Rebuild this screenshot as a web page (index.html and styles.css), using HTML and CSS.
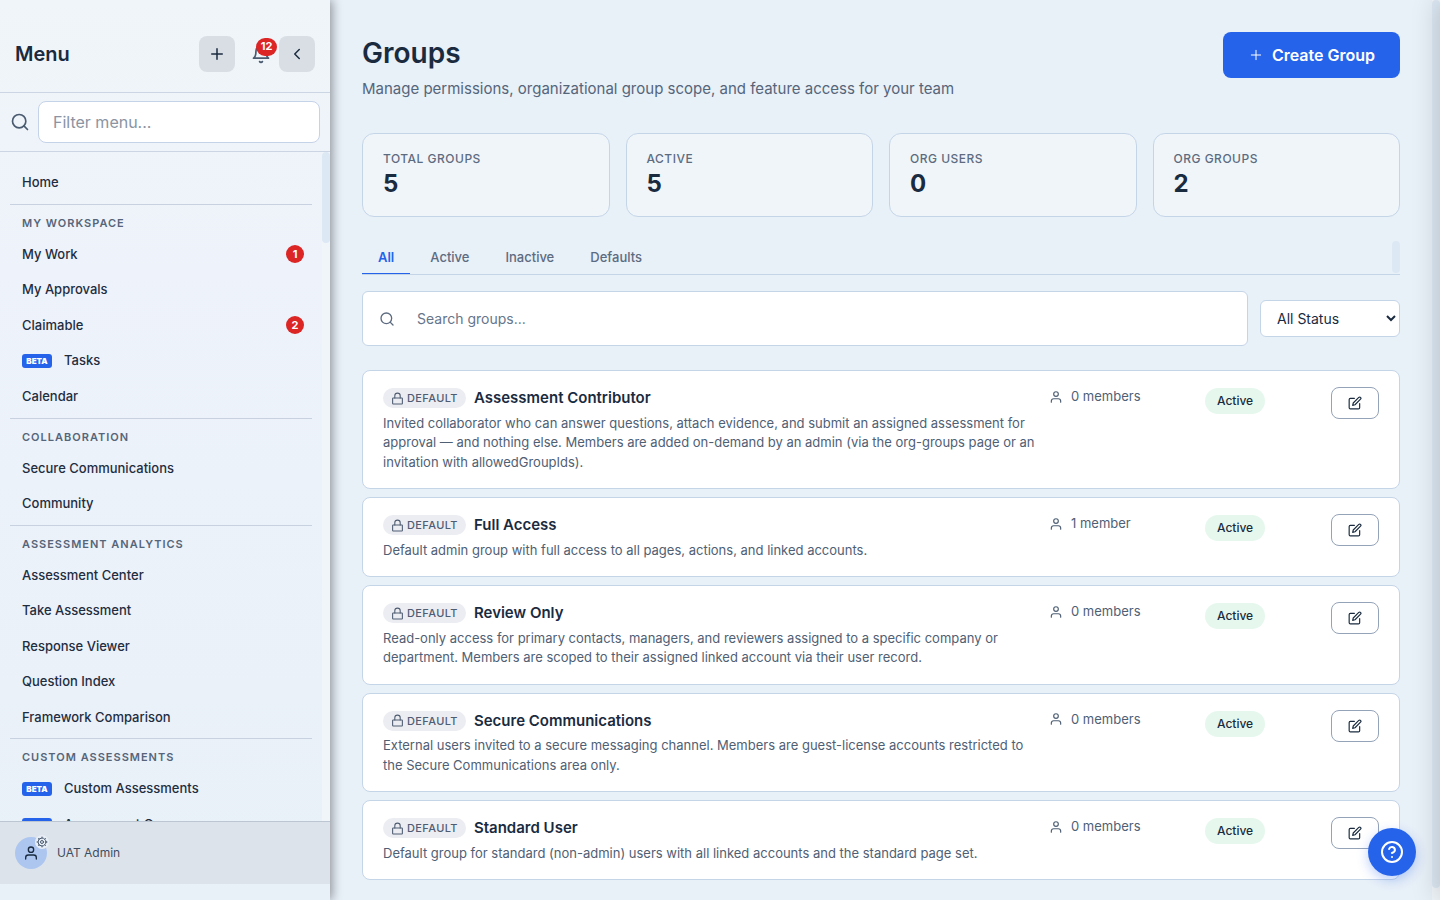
FILE: index.html
```html
<!DOCTYPE html>
<html lang="en">
<head>
    <meta charset="UTF-8">
    <meta name="viewport" content="width=device-width, initial-scale=1.0">
    <title>Groups</title>
    <link rel="stylesheet" href="styles.css">
</head>
<body>
    <!-- Shared icons -->
    <svg class="icon-defs" aria-hidden="true">
        <symbol id="icon-search" viewBox="0 0 24 24"><circle cx="11" cy="11" r="8"/><path d="m21 21-4.3-4.3"/></symbol>
        <symbol id="icon-plus" viewBox="0 0 24 24"><path d="M5 12h14M12 5v14"/></symbol>
        <symbol id="icon-bell" viewBox="0 0 24 24"><path d="M6 8a6 6 0 0 1 12 0c0 7 3 9 3 9H3s3-2 3-9"/><path d="M10.3 21a1.94 1.94 0 0 0 3.4 0"/></symbol>
        <symbol id="icon-left" viewBox="0 0 24 24"><path d="m15 18-6-6 6-6"/></symbol>
        <symbol id="icon-user" viewBox="0 0 24 24"><path d="M20 21v-2a4 4 0 0 0-4-4H8a4 4 0 0 0-4 4v2"/><circle cx="12" cy="7" r="4"/></symbol>
        <symbol id="icon-lock" viewBox="0 0 24 24"><rect x="3" y="11" width="18" height="11" rx="1"/><path d="M7 11V7a5 5 0 0 1 10 0v4"/></symbol>
        <symbol id="icon-edit" viewBox="0 0 24 24"><path d="M11 4H4a2 2 0 0 0-2 2v14a2 2 0 0 0 2 2h14a2 2 0 0 0 2-2v-7"/><path d="M18.5 2.5a2.12 2.12 0 0 1 3 3L12 15l-4 1 1-4z"/></symbol>
        <symbol id="icon-gear" viewBox="0 0 24 24"><circle cx="12" cy="12" r="3"/><circle cx="12" cy="12" r="8"/><path d="M12 4V2M12 22v-2M4 12H2M22 12h-2M6.300 6.300 5 5M19 19l-1.300-1.300M6.300 17.700 5 19M19 5l-1.300 1.300"/></symbol>
        <symbol id="icon-help" viewBox="0 0 24 24"><circle cx="12" cy="12" r="10"/><path d="M9.090 9a3 3 0 0 1 5.830 1c0 2-3 3-3 3M12 17h.01"/></symbol>
    </svg>

    <div class="app">
        <!-- Sidebar -->
        <aside class="sidebar">
            <div class="sidebar-header">
                <h2>Menu</h2>
                <button class="icon-btn" type="button" aria-label="Add"><svg class="icon"><use href="#icon-plus"/></svg></button>
                <button class="icon-btn bell-btn" type="button" aria-label="Notifications">
                    <svg class="icon"><use href="#icon-bell"/></svg>
                    <span class="bell-count">12</span>
                </button>
                <button class="icon-btn" type="button" aria-label="Collapse menu"><svg class="icon"><use href="#icon-left"/></svg></button>
            </div>
            <div class="sidebar-filter">
                <label for="menuFilter" aria-label="Filter menu"><svg class="icon"><use href="#icon-search"/></svg></label>
                <input type="text" id="menuFilter" placeholder="Filter menu...">
            </div>
            <div class="nav-wrap">
                <nav class="nav">
                    <ul>
                        <li><a href="#">Home</a></li>
                    </ul>
                    <h3>My Workspace</h3>
                    <ul>
                        <li><a href="#">My Work <span class="count">1</span></a></li>
                        <li><a href="#">My Approvals</a></li>
                        <li><a href="#">Claimable <span class="count">2</span></a></li>
                        <li><a href="#"><span class="beta">BETA</span>Tasks</a></li>
                        <li><a href="#">Calendar</a></li>
                    </ul>
                    <h3>Collaboration</h3>
                    <ul>
                        <li><a href="#">Secure Communications</a></li>
                        <li><a href="#">Community</a></li>
                    </ul>
                    <h3>Assessment Analytics</h3>
                    <ul>
                        <li><a href="#">Assessment Center</a></li>
                        <li><a href="#">Take Assessment</a></li>
                        <li><a href="#">Response Viewer</a></li>
                        <li><a href="#">Question Index</a></li>
                        <li><a href="#">Framework Comparison</a></li>
                    </ul>
                    <h3>Custom Assessments</h3>
                    <ul>
                        <li><a href="#"><span class="beta">BETA</span>Custom Assessments</a></li>
                        <li><a href="#"><span class="beta">BETA</span>Assessment Groups</a></li>
                    </ul>
                </nav>
                <div class="nav-track"></div>
            </div>
            <div class="sidebar-user">
                <div class="avatar">
                    <svg class="icon"><use href="#icon-user"/></svg>
                    <span class="avatar-gear"><svg class="icon"><use href="#icon-gear"/></svg></span>
                </div>
                <span>UAT Admin</span>
            </div>
        </aside>

        <!-- Main content -->
        <main class="main">
            <header class="page-header">
                <div>
                    <h1>Groups</h1>
                    <p>Manage permissions, organizational group scope, and feature access for your team</p>
                </div>
                <button class="create-btn" type="button"><svg class="icon"><use href="#icon-plus"/></svg>Create Group</button>
            </header>

            <section class="stats">
                <div class="stat"><span class="stat-label">Total Groups</span><span class="stat-value">5</span></div>
                <div class="stat"><span class="stat-label">Active</span><span class="stat-value">5</span></div>
                <div class="stat"><span class="stat-label">Org Users</span><span class="stat-value">0</span></div>
                <div class="stat"><span class="stat-label">Org Groups</span><span class="stat-value">2</span></div>
            </section>

            <div class="tabs">
                <button class="tab active" type="button">All</button>
                <button class="tab" type="button">Active</button>
                <button class="tab" type="button">Inactive</button>
                <button class="tab" type="button">Defaults</button>
            </div>

            <div class="filters">
                <div class="search-box">
                    <label for="groupSearch" aria-label="Search groups"><svg class="icon"><use href="#icon-search"/></svg></label>
                    <input type="text" id="groupSearch" placeholder="Search groups...">
                </div>
                <select aria-label="Status">
                    <option>All Status</option>
                    <option>Active</option>
                    <option>Inactive</option>
                </select>
            </div>

            <!-- Group list -->
            <div class="group-list">
                <article class="group">
                    <div>
                        <div class="group-title"><span class="default-tag"><svg class="icon"><use href="#icon-lock"/></svg>DEFAULT</span><h2>Assessment Contributor</h2></div>
                        <p>Invited collaborator who can answer questions, attach evidence, and submit an assigned assessment for approval — and nothing else. Members are added on-demand by an admin (via the org-groups page or an invitation with allowedGroupIds).</p>
                    </div>
                    <div class="members"><svg class="icon"><use href="#icon-user"/></svg>0 members</div>
                    <div><span class="status">Active</span></div>
                    <button class="edit-btn" type="button" aria-label="Edit Assessment Contributor"><svg class="icon"><use href="#icon-edit"/></svg></button>
                </article>
                <article class="group">
                    <div>
                        <div class="group-title"><span class="default-tag"><svg class="icon"><use href="#icon-lock"/></svg>DEFAULT</span><h2>Full Access</h2></div>
                        <p>Default admin group with full access to all pages, actions, and linked accounts.</p>
                    </div>
                    <div class="members"><svg class="icon"><use href="#icon-user"/></svg>1 member</div>
                    <div><span class="status">Active</span></div>
                    <button class="edit-btn" type="button" aria-label="Edit Full Access"><svg class="icon"><use href="#icon-edit"/></svg></button>
                </article>
                <article class="group">
                    <div>
                        <div class="group-title"><span class="default-tag"><svg class="icon"><use href="#icon-lock"/></svg>DEFAULT</span><h2>Review Only</h2></div>
                        <p>Read-only access for primary contacts, managers, and reviewers assigned to a specific company or department. Members are scoped to their assigned linked account via their user record.</p>
                    </div>
                    <div class="members"><svg class="icon"><use href="#icon-user"/></svg>0 members</div>
                    <div><span class="status">Active</span></div>
                    <button class="edit-btn" type="button" aria-label="Edit Review Only"><svg class="icon"><use href="#icon-edit"/></svg></button>
                </article>
                <article class="group">
                    <div>
                        <div class="group-title"><span class="default-tag"><svg class="icon"><use href="#icon-lock"/></svg>DEFAULT</span><h2>Secure Communications</h2></div>
                        <p>External users invited to a secure messaging channel. Members are guest-license accounts restricted to the Secure Communications area only.</p>
                    </div>
                    <div class="members"><svg class="icon"><use href="#icon-user"/></svg>0 members</div>
                    <div><span class="status">Active</span></div>
                    <button class="edit-btn" type="button" aria-label="Edit Secure Communications"><svg class="icon"><use href="#icon-edit"/></svg></button>
                </article>
                <article class="group">
                    <div>
                        <div class="group-title"><span class="default-tag"><svg class="icon"><use href="#icon-lock"/></svg>DEFAULT</span><h2>Standard User</h2></div>
                        <p>Default group for standard (non-admin) users with all linked accounts and the standard page set.</p>
                    </div>
                    <div class="members"><svg class="icon"><use href="#icon-user"/></svg>0 members</div>
                    <div><span class="status">Active</span></div>
                    <button class="edit-btn" type="button" aria-label="Edit Standard User"><svg class="icon"><use href="#icon-edit"/></svg></button>
                </article>
            </div>
        </main>
        <div class="page-track"></div>
    </div>

    <!-- Closed drawer, only its shadow shows at the window edge -->
    <div class="drawer"></div>
    <button class="help-btn" type="button" aria-label="Help"><svg class="icon"><use href="#icon-help"/></svg></button>
</body>
</html>
```

FILE: styles.css
```css
/* General Styles */
* {
    box-sizing: border-box;
}

body {
    font-family: Inter, sans-serif;
    font-size: 13px;
    line-height: 1.5;
    margin: 0;
    background-color: #e8f0f8;
    color: #1a2b3f;
    overflow: hidden;
}

h1, h2, h3, p, ul {
    margin: 0;
    padding: 0;
}

ul {
    list-style: none;
}

button, input, select {
    font-family: inherit;
    color: inherit;
}

button {
    padding: 0;
    border: none;
    cursor: pointer;
}

.icon-defs {
    display: none;
}

.icon {
    display: block;
    flex: none;
    width: 14px;
    height: 14px;
    fill: none;
    stroke: currentColor;
    stroke-width: 2;
    stroke-linecap: round;
    stroke-linejoin: round;
}

.app {
    display: flex;
    height: 100vh;
}

/* Sidebar */
.sidebar {
    position: relative;
    z-index: 1;
    flex: none;
    display: flex;
    flex-direction: column;
    width: 330px;
    padding-bottom: 16px;
    background: linear-gradient(180deg, #f0f5f9 0%, #eef3fb 30%, #e8f0f8 100%);
    box-shadow: 2px 0 10px rgba(0, 0, 0, 0.4);
}

.sidebar-header {
    display: flex;
    align-items: center;
    padding: 36px 15px 20px;
    border-bottom: 1px solid #cbd5e3;
}

.sidebar-header h2 {
    flex: 1;
    font-size: 20px;
    font-weight: 600;
}

.icon-btn {
    display: flex;
    align-items: center;
    justify-content: center;
    width: 36px;
    height: 36px;
    border-radius: 8px;
    background-color: #d9dee4;
}

.icon-btn .icon {
    width: 18px;
    height: 18px;
}

.bell-btn {
    position: relative;
    margin-left: 8px;
    background: none;
    color: #4a5b70;
}

.bell-btn .icon {
    width: 20px;
    height: 20px;
}

.bell-count {
    position: absolute;
    top: 2px;
    right: 2px;
    width: 21px;
    height: 18px;
    border-radius: 9px;
    background-color: #dc2626;
    color: #fff;
    font-size: 11px;
    font-weight: 700;
    line-height: 17px;
    text-align: center;
}

.sidebar-filter {
    display: flex;
    align-items: center;
    gap: 8px;
    padding: 8px 10px;
    border-bottom: 1px solid #cbd5e3;
    color: #4a5b70;
}

.sidebar-filter .icon {
    width: 20px;
    height: 20px;
}

.sidebar-filter input {
    flex: 1;
    min-width: 0;
    height: 42px;
    padding: 0 14px;
    border: 1px solid #c5d3e8;
    border-radius: 8px;
    background-color: #fff;
    font-size: 16px;
}

.sidebar-filter input::placeholder {
    color: #8a94a3;
}

.nav-wrap {
    flex: 1;
    display: flex;
    min-height: 0;
}

.nav {
    flex: 1;
    padding: 13px 10px 0;
    overflow: hidden;
}

.nav a {
    display: flex;
    align-items: center;
    padding: 8px 8px 8px 12px;
    color: #1f2d40;
    font-weight: 500;
    text-decoration: none;
}

.nav h3 {
    padding: 10px 12px 6px;
    margin-top: 3px;
    border-top: 1px solid #c8d1df;
    color: #566579;
    font-size: 11px;
    font-weight: 600;
    line-height: 16px;
    letter-spacing: 1px;
    text-transform: uppercase;
}

.nav .count {
    width: 18px;
    height: 18px;
    margin-left: auto;
    border-radius: 50%;
    background-color: #dc2626;
    color: #fff;
    font-size: 11px;
    font-weight: 700;
    line-height: 18px;
    text-align: center;
}

.nav .beta {
    width: 30px;
    margin: 3px 12px 3px 0;
    border-radius: 3px;
    background-color: #2563eb;
    color: #fff;
    font-size: 8px;
    font-weight: 900;
    line-height: 14px;
    text-align: center;
}

/* Slim scrollbars */
.nav-track {
    width: 8px;
    background-color: #f0f5f9;
}

.nav-track::before {
    content: "";
    display: block;
    height: 91px;
    border-radius: 4px;
    background-color: #dce8f4;
}

.page-track {
    flex: none;
    width: 8px;
    background-color: #f0f5f9;
}

.page-track::before {
    content: "";
    display: block;
    height: calc(100% - 12px);
    border-radius: 4px;
    background-color: #dce8f4;
}

.sidebar-user {
    display: flex;
    align-items: center;
    gap: 10px;
    padding: 15px;
    border-top: 1px solid #bcc6d2;
    background-color: #dce3ea;
    color: #3f4c5e;
    font-size: 12px;
}

.avatar {
    position: relative;
    display: flex;
    align-items: center;
    justify-content: center;
    width: 32px;
    height: 32px;
    border-radius: 50%;
    background-color: #adc6f0;
    color: #1a2b3f;
}

.avatar > .icon {
    width: 16px;
    height: 16px;
}

.avatar-gear {
    position: absolute;
    top: -2px;
    right: -2px;
    padding: 1px;
    border-radius: 50%;
    background-color: #e8eef5;
    color: #4a5b70;
}

.avatar-gear .icon {
    width: 12px;
    height: 12px;
}

/* Main content */
.main {
    flex: 1;
    min-width: 0;
    padding: 32px;
    overflow-y: auto;
    scrollbar-width: none;
}

.page-header {
    display: flex;
    align-items: flex-start;
    justify-content: space-between;
    margin-bottom: 33px;
}

.page-header h1 {
    font-size: 28px;
    font-weight: 600;
    line-height: 42px;
}

.page-header p {
    margin-top: 4px;
    color: #55657a;
    font-size: 15px;
    line-height: 22px;
}

.create-btn {
    display: flex;
    align-items: center;
    gap: 8px;
    height: 46px;
    padding: 0 25px;
    border-radius: 8px;
    background-color: #2563eb;
    color: #fff;
    font-size: 16px;
    font-weight: 600;
}

.create-btn .icon {
    width: 16px;
    height: 16px;
    stroke-width: 1.5;
}

/* Stats */
.stats {
    display: grid;
    grid-template-columns: repeat(4, 1fr);
    gap: 16px;
    margin-bottom: 24px;
}

.stat {
    display: flex;
    flex-direction: column;
    height: 84px;
    padding: 16px 20px;
    border: 1px solid #c5d5e8;
    border-radius: 12px;
    background-color: #f0f5f9;
}

.stat-label {
    color: #5d6b80;
    font-size: 12px;
    font-weight: 500;
    line-height: 18px;
    letter-spacing: 0.5px;
    text-transform: uppercase;
}

.stat-value {
    font-size: 24px;
    font-weight: 700;
    line-height: 32px;
}

/* Tabs */
.tabs {
    position: relative;
    display: flex;
    gap: 4px;
    margin-bottom: 16px;
    border-bottom: 1px solid #c5d5e8;
}

.tabs::after {
    content: "";
    position: absolute;
    top: 0;
    right: 0;
    width: 8px;
    height: 32px;
    border-radius: 4px;
    background-color: #dce8f4;
}

.tab {
    height: 33px;
    padding: 0 16px;
    border-bottom: 1px solid transparent;
    background: none;
    color: #5d6b80;
    font-size: 13px;
    font-weight: 500;
}

.tab.active {
    border-color: #2563eb;
    color: #2563eb;
    font-weight: 600;
}

/* Search and status filter */
.filters {
    display: flex;
    align-items: center;
    gap: 12px;
    margin-bottom: 24px;
}

.search-box {
    flex: 1;
    display: flex;
    align-items: center;
    gap: 22px;
    height: 55px;
    padding: 0 16px;
    border: 1px solid #c5d5e8;
    border-radius: 6px;
    background-color: #fff;
    color: #5d6b80;
}

.search-box .icon {
    width: 16px;
    height: 16px;
}

.search-box input {
    flex: 1;
    min-width: 0;
    padding: 0;
    border: none;
    background: none;
    color: #1a2b3f;
    font-size: 14px;
}

.search-box input::placeholder {
    color: #66758a;
}

.filters select {
    width: 140px;
    height: 37px;
    padding: 0 0 0 12px;
    border: 1px solid #c5d5e8;
    border-radius: 6px;
    background-color: #fff;
    font-size: 14px;
}

/* Group list */
.group-list {
    display: flex;
    flex-direction: column;
    gap: 8px;
}

.group {
    display: grid;
    grid-template-columns: 1fr 144px 114px 48px;
    gap: 12px;
    align-items: start;
    padding: 16px 20px;
    border: 1px solid #c5d5e8;
    border-radius: 8px;
    background-color: #fff;
}

.group-title {
    display: flex;
    align-items: center;
    gap: 8px;
    margin-bottom: 4px;
}

.group-title h2 {
    font-size: 15px;
    font-weight: 600;
}

.default-tag {
    display: flex;
    align-items: center;
    gap: 3px;
    height: 20px;
    padding: 0 8px;
    border-radius: 10px;
    background-color: #ecedf2;
    color: #4f5d72;
    font-size: 11px;
    font-weight: 500;
    letter-spacing: 0.4px;
}

.default-tag .icon {
    width: 13px;
    height: 13px;
}

.group p {
    color: #4f6074;
}

.members {
    display: flex;
    align-items: center;
    gap: 8px;
    color: #4f6074;
}

.status {
    display: inline-block;
    margin-top: 1px;
    padding: 4px 12px;
    border-radius: 13px;
    background-color: #e6f8ee;
    font-size: 12px;
    font-weight: 500;
    line-height: 18px;
}

.edit-btn {
    display: flex;
    align-items: center;
    justify-content: center;
    height: 32px;
    border: 1px solid #94a3b8;
    border-radius: 8px;
    background-color: #fff;
}

/* Overlays */
.drawer {
    position: fixed;
    top: 0;
    bottom: 0;
    left: 100%;
    width: 400px;
    box-shadow: -4px 0 24px rgba(0, 0, 0, 0.15);
}

.help-btn {
    position: fixed;
    right: 24px;
    bottom: 24px;
    display: flex;
    align-items: center;
    justify-content: center;
    width: 48px;
    height: 48px;
    border-radius: 50%;
    background-color: #2563eb;
    color: #fff;
    box-shadow: 0 4px 12px rgba(37, 99, 235, 0.3);
}

.help-btn .icon {
    width: 24px;
    height: 24px;
}
```
